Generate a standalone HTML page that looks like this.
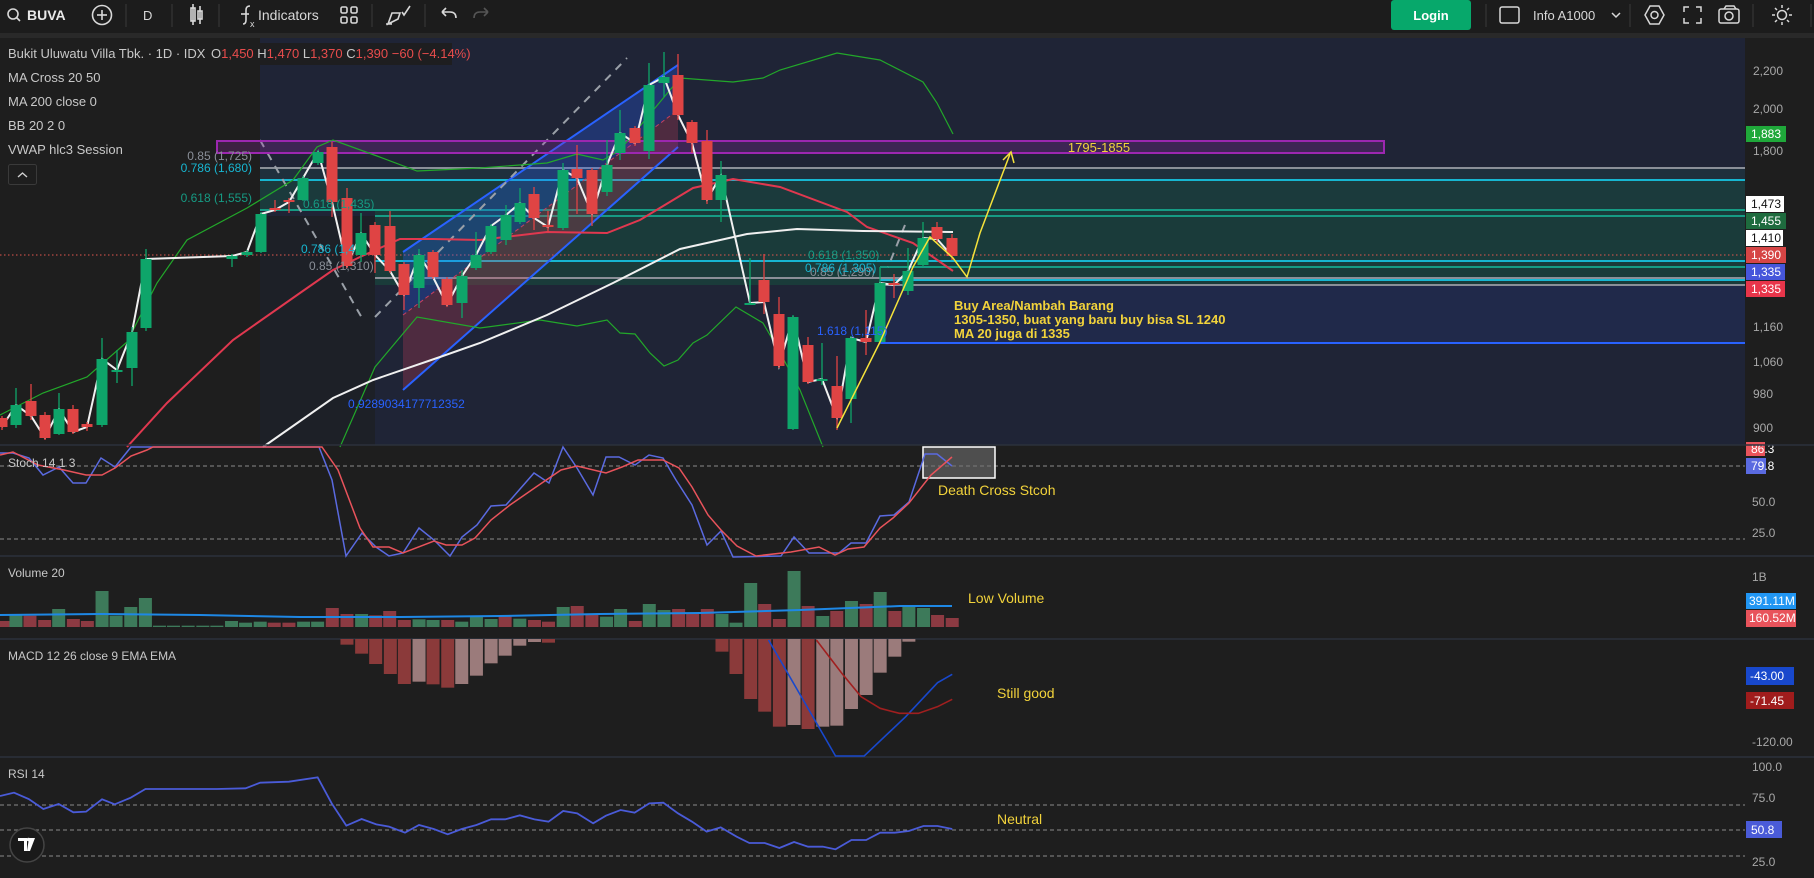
<!DOCTYPE html>
<html><head><meta charset="utf-8"><style>
html,body{margin:0;padding:0;background:#1e1e1e;width:1814px;height:878px;overflow:hidden}
svg{display:block;font-family:"Liberation Sans",sans-serif}
</style></head><body>
<svg id="s" width="1814" height="878" viewBox="0 0 1814 878" xmlns="http://www.w3.org/2000/svg">
<rect width="1814" height="878" fill="#1e1e1e"/>
<!-- top bar -->
<rect width="1814" height="33" fill="#1c1c1c"/>
<rect y="33" width="1814" height="5" fill="#292929"/>
<g fill="none" stroke="#d8d8d8" stroke-width="1.6">
<circle cx="13" cy="14" r="5"/><line x1="16.5" y1="17.5" x2="20" y2="21"/>
<circle cx="102" cy="15" r="9.5"/><line x1="102" y1="10" x2="102" y2="20"/><line x1="97" y1="15" x2="107" y2="15"/>
<rect x="191" y="8" width="4" height="13"/><line x1="193" y1="4" x2="193" y2="25"/><rect x="198" y="11" width="4" height="8"/><line x1="200" y1="6" x2="200" y2="24"/>
<path d="M243 24 q3 0 3-4 v-10 q0-4 4-4"/><line x1="241" y1="14" x2="249" y2="14"/>
<rect x="341" y="7" width="6" height="6" rx="1.5"/><rect x="351" y="7" width="6" height="6" rx="1.5"/><rect x="341" y="17" width="6" height="6" rx="1.5"/><rect x="351" y="17" width="6" height="6" rx="1.5"/>
<path d="M388 24 l4-11 l8 0 l-2 6 z M386 24 h6"/><path d="M402 12 l2 3 l6-9"/>
<path d="M442 12 h8 q6 0 6 6 M442 12 l4-4 M442 12 l4 4"/>
</g>
<path d="M488 12 h-8 q-6 0-6 6 M488 12 l-4-4 M488 12 l-4 4" fill="none" stroke="#555" stroke-width="1.6"/>
<text x="250" y="27" fill="#d8d8d8" font-size="9">x</text>
<text x="27" y="20" fill="#e8e8e8" font-size="14" font-weight="bold">BUVA</text>
<text x="143" y="20" fill="#d8d8d8" font-size="13">D</text>
<text x="258" y="20" fill="#d8d8d8" font-size="14">Indicators</text>
<g stroke="#3a3a3a" stroke-width="1"><line x1="126" y1="4" x2="126" y2="27"/><line x1="172" y1="4" x2="172" y2="27"/><line x1="219" y1="4" x2="219" y2="27"/><line x1="372" y1="4" x2="372" y2="27"/><line x1="425" y1="4" x2="425" y2="27"/><line x1="1486" y1="4" x2="1486" y2="27"/><line x1="1630" y1="4" x2="1630" y2="27"/><line x1="1753" y1="4" x2="1753" y2="27"/><line x1="1811" y1="4" x2="1811" y2="27"/></g>
<rect x="1391" y="0" width="80" height="30" rx="3" fill="#07a86b"/>
<text x="1431" y="20" fill="#fff" font-size="13" font-weight="bold" text-anchor="middle">Login</text>
<g fill="none" stroke="#d8d8d8" stroke-width="1.5">
<rect x="1500" y="7" width="19" height="16" rx="2"/>
<path d="M1612 13 l4 4 l4-4"/>
<path d="M1645 15 l5-9 h9 l5 9 l-5 9 h-9 z"/><circle cx="1654.5" cy="15" r="3.5"/>
<path d="M1684 12 v-5 h5 M1696 7 h5 v5 M1701 18 v5 h-5 M1689 23 h-5 v-5"/>
<rect x="1719" y="9" width="20" height="14" rx="2"/><path d="M1724 9 l2-3 h8 l2 3"/><circle cx="1729" cy="16" r="4"/>
<circle cx="1782" cy="15" r="4.5"/><path d="M1782 5 v3 M1782 22 v3 M1772 15 h3 M1789 15 h3 M1775 8 l2 2 M1787 20 l2 2 M1789 8 l-2 2 M1777 20 l-2 2"/>
</g>
<text x="1533" y="20" fill="#d8d8d8" font-size="13">Info A1000</text>

<!-- main pane backgrounds -->
<rect x="260" y="38" width="1485" height="407" fill="#1f2436"/>
<rect x="260" y="216" width="115" height="229" fill="#1d2027"/>
<rect x="260" y="168" width="1485" height="12" fill="#1f303d"/>
<rect x="260" y="180" width="1485" height="30" fill="#1b3a3c"/>
<rect x="375" y="210" width="1370" height="75" fill="#1a3b3a"/>
<rect x="880" y="285" width="865" height="58" fill="#20294a"/>
<!-- fib lines -->
<g stroke-width="2">
<line x1="260" y1="168" x2="1745" y2="168" stroke="#8a8f98"/>
<line x1="260" y1="180" x2="1745" y2="180" stroke="#17b6d1"/>
<line x1="260" y1="210" x2="1745" y2="210" stroke="#169b84"/>
<line x1="375" y1="216" x2="1745" y2="216" stroke="#169b84"/>
<line x1="375" y1="278" x2="1745" y2="278" stroke="#8a8f98"/>
<line x1="375" y1="261" x2="1745" y2="261" stroke="#17b6d1"/>
<line x1="880" y1="267" x2="1745" y2="267" stroke="#169b84"/>
<line x1="880" y1="280" x2="1745" y2="280" stroke="#17b6d1"/>
<line x1="880" y1="285" x2="1745" y2="285" stroke="#8a8f98"/>
<line x1="880" y1="343" x2="1745" y2="343" stroke="#2962ff"/>
</g>
<line x1="0" y1="255" x2="1745" y2="255" stroke="#e0574f" stroke-width="1" stroke-dasharray="1.5 2.5"/>
<!-- channel -->
<polygon points="403,252 678,65 678,110 403,315" fill="rgba(41,98,255,0.28)"/>
<polygon points="403,315 678,110 678,147 403,390" fill="rgba(200,60,90,0.28)"/>
<line x1="403" y1="252" x2="678" y2="65" stroke="#2962ff" stroke-width="2"/>
<line x1="403" y1="390" x2="678" y2="147" stroke="#2962ff" stroke-width="2"/>
<line x1="403" y1="315" x2="678" y2="110" stroke="#c84060" stroke-width="1" stroke-dasharray="4 3"/>
<g stroke="#9aa0a8" stroke-width="2" stroke-dasharray="8 7" fill="none">
<line x1="260" y1="140" x2="362" y2="318"/><line x1="375" y1="317" x2="627" y2="58"/><line x1="905" y1="225" x2="888" y2="267"/>
</g>
<!-- purple rect -->
<rect x="217" y="141" width="1167" height="12" fill="rgba(156,39,176,0.25)" stroke="#9c27b0" stroke-width="2"/>
<text x="1099" y="152" fill="#f2d33b" font-size="13" text-anchor="middle">1795-1855</text>
<g id="ind" fill="none" stroke-width="1.3"></g>
<g id="cd"></g>
<!-- yellow path -->
<polyline points="837,428 880,342 913,267 930,237 953,258 967,277 980,233 1010,154" fill="none" stroke="#f5e23b" stroke-width="1.5"/>
<path d="M1003 160 l8-8 l3 11" fill="none" stroke="#f5e23b" stroke-width="1.5"/>
<!-- fib labels -->
<g font-size="12">
<text x="252" y="160" fill="#8a8f98" text-anchor="end">0.85 (1,725)</text>
<text x="252" y="172" fill="#17b6d1" text-anchor="end">0.786 (1,680)</text>
<text x="252" y="202" fill="#169b84" text-anchor="end">0.618 (1,555)</text>
<text x="303" y="208" fill="#169b84">0.618 (1,435)</text>
<text x="301" y="253" fill="#17b6d1">0.786 (1,4</text>
<text x="309" y="270" fill="#8a8f98">0.85 (1,310)</text>
<text x="348" y="408" fill="#2962ff">0.9289034177712352</text>
<text x="808" y="259" fill="#169b84">0.618 (1,350)</text>
<text x="810" y="276" fill="#8a8f98">0.85 (1,290)</text>
<text x="805" y="272" fill="#17b6d1">0.786 (1,305)</text>
<text x="817" y="335" fill="#2962ff">1.618 (1,115)</text>
</g>
<g font-size="13" fill="#f2d33b" font-weight="bold">
<text x="954" y="310">Buy Area/Nambah Barang</text>
<text x="954" y="324">1305-1350, buat yang baru buy bisa SL 1240</text>
<text x="954" y="338">MA 20 juga di 1335</text>
</g>
<!-- legend -->
<rect x="0" y="43" width="452" height="22" fill="#1e1e1e" opacity="0.9"/>
<g font-size="13" fill="#c8c8c8">
<text x="8" y="58">Bukit Uluwatu Villa Tbk. · 1D · IDX</text>
<text x="211" y="58">O<tspan fill="#e84c4c">1,450</tspan> H<tspan fill="#e84c4c">1,470</tspan> L<tspan fill="#e84c4c">1,370</tspan> C<tspan fill="#e84c4c">1,390</tspan> <tspan fill="#e84c4c">−60 (−4.14%)</tspan></text>
<text x="8" y="82">MA Cross 20 50</text>
<text x="8" y="106">MA 200 close 0</text>
<text x="8" y="130">BB 20 2 0</text>
<text x="8" y="154">VWAP hlc3 Session</text>
</g>
<rect x="8.5" y="164.5" width="28" height="20" rx="2" fill="#1e1e1e" stroke="#3a3a3a"/>
<path d="M18 177 l4.5-4 l4.5 4" fill="none" stroke="#d0d0d0" stroke-width="1.4"/>
<!-- price axis -->
<rect x="1745" y="38" width="69" height="840" fill="#1e1e1e"/>
<g font-size="12" fill="#a8a8a8">
<text x="1753" y="75">2,200</text><text x="1753" y="113">2,000</text><text x="1753" y="155">1,800</text>
<text x="1753" y="331">1,160</text><text x="1753" y="366">1,060</text><text x="1753" y="398">980</text><text x="1753" y="432">900</text>
<text x="1752" y="506">50.0</text><text x="1752" y="537">25.0</text>
<text x="1752" y="581">1B</text>
<text x="1752" y="746">-120.00</text>
<text x="1752" y="771">100.0</text><text x="1752" y="802">75.0</text><text x="1752" y="866">25.0</text>
</g>
<g font-size="12">
<rect x="1746" y="126" width="40" height="16" fill="#1fa83a"/><text x="1751" y="138" fill="#fff">1,883</text>
<rect x="1746" y="196" width="38" height="16" fill="#fff"/><text x="1751" y="208" fill="#111">1,473</text>
<rect x="1746" y="213" width="40" height="16" fill="#1e6b3e"/><text x="1751" y="225" fill="#fff">1,455</text>
<rect x="1746" y="230" width="37" height="16" fill="#fff"/><text x="1751" y="242" fill="#111">1,410</text>
<rect x="1746" y="247" width="40" height="16" fill="#d64545"/><text x="1751" y="259" fill="#fff">1,390</text>
<rect x="1746" y="264" width="39" height="16" fill="#4656db"/><text x="1751" y="276" fill="#fff">1,335</text>
<rect x="1746" y="281" width="39" height="16" fill="#e8354a"/><text x="1751" y="293" fill="#fff">1,335</text>
<rect x="1746" y="442" width="19" height="14" fill="#e8535b"/><text x="1751" y="453" fill="#fff">86.3</text>
<rect x="1746" y="458" width="20" height="16" fill="#5a6ae0"/><text x="1751" y="470" fill="#fff">79.8</text>
<rect x="1746" y="593" width="50" height="16" fill="#2196f3"/><text x="1749" y="605" fill="#fff">391.11M</text>
<rect x="1746" y="610" width="50" height="17" fill="#e8535b"/><text x="1749" y="622" fill="#fff">160.52M</text>
<rect x="1746" y="667" width="48" height="18" fill="#1848cc"/><text x="1750" y="680" fill="#fff">-43.00</text>
<rect x="1746" y="692" width="48" height="17" fill="#a01c1c"/><text x="1750" y="705" fill="#fff">-71.45</text>
<rect x="1746" y="821" width="36" height="17" fill="#4a5bd8"/><text x="1751" y="834" fill="#fff">50.8</text>
</g>
<!-- pane separators & dashed -->
<g stroke="#2c313c" stroke-width="1.5"><line x1="0" y1="445" x2="1814" y2="445"/><line x1="0" y1="556" x2="1814" y2="556"/><line x1="0" y1="639" x2="1814" y2="639"/><line x1="0" y1="757" x2="1814" y2="757"/></g>
<g stroke="#8a8a8a" stroke-width="1" stroke-dasharray="4 3"><line x1="0" y1="466" x2="1745" y2="466"/><line x1="0" y1="539" x2="1745" y2="539"/><line x1="0" y1="805" x2="1745" y2="805"/><line x1="0" y1="830" x2="1745" y2="830"/><line x1="0" y1="856" x2="1745" y2="856"/></g>
<rect x="923" y="447" width="72" height="31" fill="rgba(110,110,110,0.6)" stroke="#fff" stroke-width="1.5"/>
<g id="low" fill="none" stroke-width="1.5"></g>
<g font-size="12" fill="#c8c8c8">
<text x="8" y="467">Stoch 14 1 3</text><text x="8" y="577">Volume 20</text><text x="8" y="660">MACD 12 26 close 9 EMA EMA</text><text x="8" y="778">RSI 14</text>
</g>
<g font-size="14" fill="#f2d33b">
<text x="938" y="495">Death Cross Stcoh</text><text x="968" y="603">Low Volume</text><text x="997" y="698">Still good</text><text x="997" y="824">Neutral</text>
</g>
<circle cx="27" cy="845" r="17" fill="#1a1a1a" stroke="#444" stroke-width="1.5"/>
<path d="M18 838 h9 v13 h-3 v-10 h-6 z M29 838 h6 l-5 13 h-3 z" fill="#fff"/>
<circle cx="28.5" cy="839.5" r="1.8" fill="#fff"/>
</svg>
<script>
var NS="http://www.w3.org/2000/svg";
function el(p,t,a){var e=document.createElementNS(NS,t);for(var k in a)e.setAttribute(k,a[k]);p.appendChild(e);return e;}
var C=[[2,418,427,416,430,0],[16,405,425,388,428,1],[31,401,416,384,420,0],[45,415,438,412,440,0],[59,409,434,393,435,1],[73,409,432,405,434,0],[87,424,427,422,431,0],[102,359,425,338,427,1],[117,370,372,350,383,1],[132,332,368,327,386,1],[146,259,328,249,331,1],[232,256,259,254,267,1],[247,252,255,250,257,1],[261,214,252,212,253,1],[275,208,210,200,212,0],[289,200,202,198,213,0],[303,178,200,176,201,1],[318,152,163,150,165,1],[332,147,202,142,217,0],[347,198,266,188,268,0],[361,233,255,213,262,1],[375,225,255,222,273,0],[390,226,271,211,273,0],[404,264,295,262,310,0],[419,255,288,249,308,1],[433,252,277,250,279,0],[447,279,305,277,307,0],[462,276,303,270,318,1],[476,255,268,232,270,1],[491,226,252,224,254,1],[506,215,240,205,245,1],[520,203,222,188,224,1],[534,194,218,187,230,0],[548,225,227,211,232,0],[563,170,228,163,230,1],[577,169,178,145,214,0],[592,170,214,168,226,0],[607,165,192,140,196,1],[620,133,153,110,160,1],[635,128,143,126,146,0],[649,85,151,63,159,1],[664,77,83,52,97,1],[678,75,115,54,120,0],[692,122,143,120,153,0],[707,141,200,130,204,0],[721,175,200,161,222,1],[750,303,305,258,305,1],[764,280,302,254,314,0],[779,314,366,297,368,0],[793,317,429,315,430,1],[808,345,382,337,384,0],[822,379,381,343,385,1],[837,386,418,356,430,0],[851,338,399,336,423,1],[866,338,342,310,355,0],[880,283,342,267,344,1],[894,283,285,274,298,0],[908,271,291,248,295,1],[923,238,265,222,267,1],[937,227,239,222,243,0],[952,238,256,234,260,0]];
var ind=document.getElementById("ind"),cd=document.getElementById("cd"),low=document.getElementById("low");
function pl(g,pts,col,w){el(g,"polyline",{points:pts.map(function(p){return p.join(",")}).join(" "),stroke:col,"stroke-width":w||1.3,fill:"none"});}
pl(ind,[[0,415],[43,393],[87,377],[127,342],[157,283],[187,240],[247,208],[293,180],[317,147],[333,140],[377,156],[417,171],[480,168],[547,163],[577,154],[603,160],[620,150],[680,78],[733,82],[763,78],[780,70],[837,53],[880,60],[923,82],[937,103],[953,134]],"#22a82a",1.2);
pl(ind,[[340,447],[375,367],[417,317],[480,328],[540,320],[577,326],[607,320],[620,333],[635,334],[650,353],[664,366],[678,360],[693,343],[707,335],[736,307],[763,323],[777,347],[800,390],[823,447]],"#22a82a",1.2);
pl(ind,[[127,447],[167,403],[233,340],[300,293],[333,270],[360,257],[400,239],[433,239],[480,240],[547,232],[607,233],[640,220],[693,188],[733,179],[780,187],[847,212],[867,227],[913,243],[953,271]],"#e0384f",2);
pl(ind,[[263,447],[333,398],[373,380],[440,357],[480,343],[547,315],[613,283],[680,249],[747,234],[797,229],[863,231],[953,232]],"#f0f0f0",2);
var cl=[];C.forEach(function(c){cl.push([c[0],c[5]?c[1]:c[2]]);});
pl(ind,cl,"#f0f0f0",2);
C.forEach(function(c){var col=c[5]?"#0ea56a":"#df4444";
el(cd,"line",{x1:c[0],x2:c[0],y1:c[3],y2:c[4],stroke:col,"stroke-width":1.3});
el(cd,"rect",{x:c[0]-5.5,y:c[1],width:11,height:Math.max(2,c[2]-c[1]),fill:col});});
var X=function(o){return o*0.6378},Y=function(o){return 440+o/3};
var V=[[5,543,0],[25,522,1],[47,527,0],[70,540,0],[92,507,1],[115,537,0],[137,543,0],[160,453,1],[182,527,1],[205,501,1],[228,474,1],[250,557,1],[272,557,1],[295,557,1],[318,557,1],[340,557,1],[363,543,1],[385,548,1],[408,545,1],[430,548,0],[453,548,0],[476,545,1],[498,545,1],[521,504,0],[544,522,0],[567,522,1],[589,526,0],[611,513,0],[634,540,0],[657,538,1],[679,540,1],[702,540,0],[724,545,1],[747,528,1],[770,537,1],[792,528,0],[815,536,1],[838,540,0],[860,545,0],[883,501,1],[905,498,0],[928,522,0],[951,530,1],[973,507,1],[996,543,0],[1018,492,1],[1041,510,1],[1064,507,0],[1086,522,0],[1109,507,0],[1132,522,1],[1154,548,1],[1177,429,1],[1199,492,0],[1222,537,0],[1245,393,1],[1267,498,0],[1290,528,1],[1312,513,0],[1335,483,1],[1358,492,0],[1380,456,1],[1403,513,0],[1425,501,1],[1448,504,1],[1470,525,0],[1493,534,0]];
V.forEach(function(v){var y=Y(v[1]);el(low,"rect",{x:X(v[0])-6.5,y:y,width:13,height:Math.max(1,627-y),fill:v[2]?"#3d7a5a":"#8c3a42",stroke:"none"});});
pl(low,[[0,615],[100,614],[200,615],[300,617],[400,617],[500,616],[600,614],[700,613],[800,610],[850,608],[900,606],[952,606]],"#1e88e5",2);
var M=[[544,614,0],[567,641,0],[589,672,0],[612,702,0],[634,732,0],[657,725,1],[679,733,0],[702,743,0],[724,732,1],[747,707,1],[770,670,1],[792,647,1],[815,617,1],[838,606,1],[860,608,0],[1132,635,0],[1154,702,0],[1177,777,0],[1199,815,0],[1222,860,0],[1245,855,1],[1267,867,0],[1290,860,1],[1312,857,1],[1335,807,1],[1358,765,1],[1380,698,1],[1403,650,1],[1425,605,1]];
M.forEach(function(m){el(low,"rect",{x:X(m[0])-6.5,y:639,width:13,height:Y(m[1])-639,fill:m[2]?"#9b7b7b":"#8b3a3a",stroke:"none"});});
function cv(a){return a.map(function(p){return [X(p[0]),Y(p[1])]});}
pl(low,cv([[1205,600],[1310,948],[1355,948],[1420,830],[1470,728],[1493,703]]),"#1848cc",1.6);
pl(low,cv([[1280,600],[1320,700],[1350,770],[1380,805],[1410,820],[1440,820],[1470,800],[1493,778]]),"#a01f1f",1.6);
pl(low,[[0,453],[13,453],[29,458],[43,475],[59,467],[73,483],[86,483],[101,458],[115,467],[131,447],[319,447],[332,480],[346,556],[362,533],[376,547],[389,556],[403,553],[419,528],[434,540],[450,556],[462,537],[477,525],[491,506],[506,505],[520,489],[534,473],[549,483],[563,447],[577,468],[593,495],[606,457],[619,457],[635,465],[649,455],[663,458],[676,480],[692,505],[707,545],[721,531],[733,557],[781,556],[794,537],[809,553],[839,553],[851,543],[866,543],[880,516],[894,515],[909,502],[925,454],[937,454],[952,466]],"#5a6ae0",1.5);
pl(low,[[0,455],[13,452],[38,465],[64,470],[86,475],[102,475],[115,468],[131,456],[147,450],[153,447],[322,447],[338,470],[360,528],[373,547],[389,547],[403,553],[434,541],[446,545],[462,545],[475,538],[491,520],[510,505],[536,487],[561,470],[577,466],[606,473],[622,467],[638,460],[663,460],[679,468],[692,487],[708,515],[721,530],[737,546],[756,556],[791,552],[819,547],[835,555],[848,549],[864,547],[880,528],[893,518],[909,503],[931,475],[952,457]],"#e8535b",1.5);
pl(low,cv([[0,1068],[22,1058],[45,1077],[68,1107],[92,1092],[115,1117],[135,1115],[160,1078],[180,1093],[205,1073],[228,1047],[340,1047],[385,1045],[408,1028],[453,1025],[498,1012],[520,1090],[543,1157],[567,1137],[590,1153],[610,1160],[635,1178],[657,1155],[680,1167],[702,1183],[724,1167],[747,1155],[770,1138],[792,1138],[815,1126],[838,1138],[860,1145],[883,1113],[905,1120],[930,1150],[950,1127],[973,1110],[995,1118],[1018,1090],[1040,1088],[1063,1120],[1085,1145],[1108,1175],[1130,1162],[1155,1190],[1175,1209],[1199,1209],[1222,1224],[1245,1206],[1267,1220],[1290,1220],[1310,1228],[1335,1200],[1358,1200],[1380,1178],[1403,1178],[1425,1173],[1448,1158],[1470,1158],[1493,1167]]),"#4a5bd8",1.8);
</script>
</body></html>
